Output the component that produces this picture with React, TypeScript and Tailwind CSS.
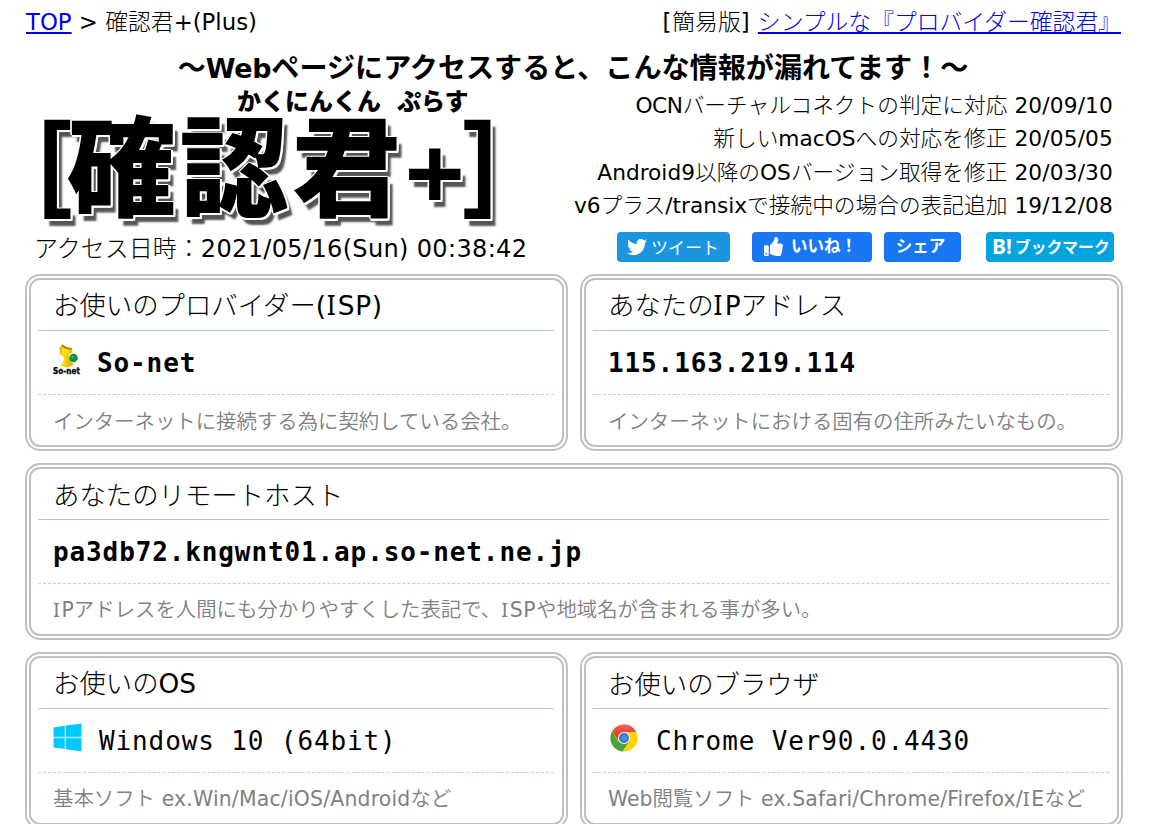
import type { ReactNode } from 'react';
import { FaThumbsUp, FaTwitter } from 'react-icons/fa';

const L = ({ children, c = '' }: { children: ReactNode; c?: string }) => (
  <span className={`whitespace-pre font-['DejaVu_Sans',sans-serif] font-normal ${c}`}>{children}</span>
);

/* Capital I with serifs */
const I = () => <span className="font-['Noto_Sans',sans-serif] font-normal tracking-[0.08em]">I</span>;

function SonetIcon() {
  return (
    <svg className="mb-[7px] shrink-0 overflow-visible" width="28" height="34" viewBox="0 0 28 34">
      <defs>
        <linearGradient id="gold" x1="0" y1="0" x2="1" y2="0.3">
          <stop offset="0" stopColor="#d9a400" />
          <stop offset="0.35" stopColor="#ffe31a" />
          <stop offset="1" stopColor="#dfb500" />
        </linearGradient>
      </defs>
      <path d="M6.500 4.500 L9.500 1.500 Q14 5 19 5 L19.500 9.500 Q14.500 11 16.500 16 Q18 20 21 21.500 L15 24.500 L6.500 23 Q12 19 10.500 14 Q9 11.500 7 11.500 Z" fill="url(#gold)" />
      <path d="M9.500 1.500 Q14 5.500 19 5 L18.500 6.500 Q13 7 8.500 3 Z" fill="#a87c00" />
      <circle cx="20.500" cy="15" r="4.300" fill="#0f8f4a" />
      <circle cx="19.500" cy="14" r="1.500" fill="#35b56e" />
      <text x="0" y="31" fontSize="8" fontWeight="700" fontFamily="DejaVu Sans" textLength="27" lengthAdjust="spacingAndGlyphs" letterSpacing="0" stroke="#000" strokeWidth="0.300">So-net</text>
    </svg>
  );
}

function WindowsIcon() {
  return (
    <svg className="mb-[8px] shrink-0" width="29" height="29" viewBox="0 0 29 29" fill="#00c8fb">
      <rect x="1" y="13" width="27" height="3" fill="#a5eafd" />
      <path d="M0.500 4.500 L11.800 2.800 V13.800 H0.500 Z M13 2.600 L28.500 0.500 V13.800 H13 Z M0.500 15.300 H11.800 V26 L0.500 24.500 Z M13 15.300 H28.500 V28.500 L13 26.200 Z" />
    </svg>
  );
}

function ChromeIcon() {
  return (
    <svg className="mb-[8px] ml-[2px] shrink-0" width="28" height="30" viewBox="0 0 28 30">
      <defs>
        <linearGradient id="red" x1="0" y1="0" x2="0" y2="1"><stop offset="0" stopColor="#f0685c" /><stop offset="1" stopColor="#d3231c" /></linearGradient>
        <radialGradient id="blue"><stop offset="0" stopColor="#5a9be6" /><stop offset="1" stopColor="#2a6fc4" /></radialGradient>
      </defs>
      <circle cx="14" cy="15" r="13.600" fill="#fdd000" />
      <path d="M14 15 L8 18.500 L2.200 8.200 A13.600 13.600 0 0 0 12.500 28.500 L19.300 18.100 Z" fill="#44a443" />
      <path d="M2.200 8.200 A13.600 13.600 0 0 1 26.200 9.100 L14 9.100 L8.800 18 Z" fill="url(#red)" />
      <circle cx="14" cy="15" r="6.100" fill="#f2f2ee" />
      <circle cx="14" cy="15" r="4.900" fill="url(#blue)" />
    </svg>
  );
}

function Card({ title, desc, children }: { title: ReactNode; desc: ReactNode; children: ReactNode }) {
  return (
    <section className="h-[177px] rounded-[15px] border-[6px] border-double border-[#c0c0c0] pr-2 pl-[7px] whitespace-nowrap">
      <h2 className="flex h-[51px] items-center border-b border-[#b0c4de] pl-[15px] text-[26.4px] leading-none font-light"><span>{title}</span></h2>
      <div className="flex h-16 items-center border-b border-dashed border-[#ffb6c1] pt-[2px] pl-[15px] font-['DejaVu_Sans_Mono',monospace] text-[26px] tracking-[0.88px]">{children}</div>
      <p className="flex h-[50px] items-center pl-[15px] text-[20.4px] leading-none font-[350] text-[#808080]"><span>{desc}</span></p>
    </section>
  );
}

function Update({ date, children }: { date: string; children: ReactNode }) {
  return (
    <li className="flex h-[33.4px] items-center justify-end">
      <span>{children}<L c="tracking-[0.15px]"> {date}</L></span>
    </li>
  );
}

export default function App() {
  return (
    <main className="h-[824px] w-[1156px] overflow-hidden bg-white pr-[33px] pl-[25px] font-['Noto_Sans_CJK_JP',sans-serif] text-black">
      <nav className="flex h-[44px] items-center justify-between pr-[2px] pl-px text-[22.8px] leading-none font-light whitespace-pre">
        <span><a className="text-[#0000ee] underline"><L>TOP</L></a><L> &gt; </L>確認君<L>+(Plus)</L></span>
        <span><L c="tracking-[1px]">[</L>簡易版<L c="tracking-[0.5px]">] </L><a className="text-[#0000ee] underline">シンプルな『プロバイダー確認君』</a></span>
      </nav>
      <h1 className="flex h-[46px] items-center justify-center pr-[2px] text-[28.1px] leading-none font-bold whitespace-nowrap">
        <span>～<span className="font-['DejaVu_Sans'] text-[27px] tracking-[-0.3px]">Web</span>ページにアクセスすると、こんな情報が漏れてます！～</span>
      </h1>
      <div className="flex h-[184px] justify-between">
        <div className="w-[520px]">
          <div className="h-[141px] pl-[16px] leading-none font-black">
            <div className="flex h-[19px] items-center pl-[196px] text-[24px]"><span>かくにんくん</span><span className="ml-4">ぷらす</span></div>
            <div className="-ml-[5px] flex h-[102px] items-center whitespace-nowrap [text-shadow:1.5px_0_#fff,-1.5px_0_#fff,0_1.5px_#fff,0_-1.5px_#fff,1px_1px_#fff,2px_2px_#fff,2px_0_#fff,0_2px_#fff,5px_7px_2px_#555]">
              <span className="-mt-[6px] w-[31px] font-['Noto_Sans'] text-[113px] font-semibold">[</span>
              <span className="text-[109px] tracking-[3.5px]">確認君</span>
              <span className="mt-[22px] w-[57px] font-['Noto_Sans'] text-[106px] font-bold">+</span>
              <span className="-mt-[6px] w-[34px] font-['Noto_Sans'] text-[113px] font-semibold">]</span>
            </div>
          </div>
          <p className="flex h-[34px] items-center pl-[9px] text-[24px] leading-none font-light"><span>アクセス日時：<L c="tracking-[0.35px]">2021/05/16(Sun) 00:38:42</L></span></p>
        </div>
        <div className="-mt-[2px] pr-[9px]">
          <ul className="pr-px text-[21.7px] leading-none font-light whitespace-nowrap">
            <Update date="20/09/10"><L c="tracking-[-0.4px]">OCN</L>バーチャルコネクトの判定に対応</Update>
            <Update date="20/05/05">新しい<L>macOS</L>への対応を修正</Update>
            <Update date="20/03/30"><L>Android9</L>以降の<L>OS</L>バージョン取得を修正</Update>
            <Update date="19/12/08"><L>v6</L>プラス<L>/transix</L>で接続中の場合の表記追加</Update>
          </ul>
          <div className="flex justify-end pt-[10px] leading-none whitespace-nowrap text-white">
            <span className="flex h-[30px] w-[113px] items-center gap-1 rounded bg-[#1b95e0] pl-[10px] text-[17px]"><FaTwitter size={20} />ツイート</span>
            <span className="ml-[22px] flex h-[30px] w-[120px] items-center gap-2 rounded bg-[#1877f2] pb-[2px] pl-3 text-[16.5px] font-bold"><FaThumbsUp size={19} className="mt-[2px]" />いいね！</span>
            <span className="ml-3 flex h-[30px] w-[77px] items-center justify-center rounded bg-[#1877f2] pr-1 pb-[3px] text-[16.5px] font-bold">シェア</span>
            <span className="ml-[25px] flex h-[30px] w-[128px] items-center gap-[3px] rounded bg-[#00a4de] pl-[6px] text-[15.8px] font-bold"><span className="font-['Noto_Sans'] text-[21px]">B!</span>ブックマーク</span>
          </div>
        </div>
      </div>
      <div className="grid grid-cols-2 gap-3">
        <Card title={<>お使いのプロバイダー<L c="tracking-[0.6px]">(<I />SP)</L></>} desc="インターネットに接続する為に契約している会社。">
          <SonetIcon /><b className="ml-4">So-net</b>
        </Card>
        <Card title={<>あなたの<L><I />P</L>アドレス</>} desc="インターネットにおける固有の住所みたいなもの。">
          <b>115.163.219.114</b>
        </Card>
        <div className="col-span-2">
          <Card title="あなたのリモートホスト" desc={<><L><I />P</L>アドレスを人間にも分かりやすくした表記で、<L c="tracking-[0.5px]"><I />SP</L>や地域名が含まれる事が多い。</>}>
            <b>pa3db72.kngwnt01.ap.so-net.ne.jp</b>
          </Card>
        </div>
        <Card title={<>お使いの<L>OS</L></>} desc={<>基本ソフト<L c="tracking-[0.2px]"> ex.Win/Mac/iOS/Android</L>など</>}>
          <WindowsIcon /><span className="ml-[17px]">Windows 10 (64bit)</span>
        </Card>
        <Card title="お使いのブラウザ" desc={<><L>Web</L>閲覧ソフト<L c="tracking-[0.15px]"> ex.Safari/Chrome/Firefox/<I />E</L>など</>}>
          <ChromeIcon /><span className="ml-[18px]">Chrome Ver90.0.4430</span>
        </Card>
      </div>
    </main>
  );
}
